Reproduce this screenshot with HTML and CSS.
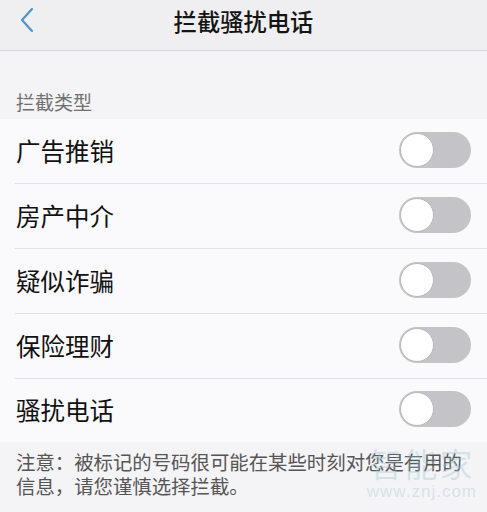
FILE: index.html
```html
<!DOCTYPE html>
<html lang="zh-CN">
<head>
    <meta charset="UTF-8">
    <meta name="viewport" content="width=device-width, initial-scale=1.0">
    <title>拦截骚扰电话</title>
    <link rel="stylesheet" href="styles.css">
</head>
<body>
    <header class="top-bar">
        <span class="back">
            <svg width="16" height="26" viewBox="0 0 16 26"><polyline points="13,2 3,13 13,24" fill="none" stroke="#4f93c9" stroke-width="2.2" stroke-linecap="round" stroke-linejoin="round"/></svg>
        </span>
        <h1 class="title">拦截骚扰电话</h1>
    </header>

    <div class="section-label">拦截类型</div>

    <ul class="list">
        <li class="row"><span class="row-text">广告推销</span><span class="switch"></span></li>
        <li class="row"><span class="row-text">房产中介</span><span class="switch"></span></li>
        <li class="row"><span class="row-text">疑似诈骗</span><span class="switch"></span></li>
        <li class="row"><span class="row-text">保险理财</span><span class="switch"></span></li>
        <li class="row"><span class="row-text">骚扰电话</span><span class="switch"></span></li>
    </ul>

    <p class="note">注意：被标记的号码很可能在某些时刻对您是有用的信息，请您谨慎选择拦截。</p>

    <!-- faint watermark over the bottom corner -->
    <div class="watermark">
        <span class="wm-big">智能家</span>
        <span class="wm-small">www.znj.com</span>
    </div>
</body>
</html>
```

FILE: styles.css
```css
body {
    margin: 0;
    width: 487px;
    height: 512px;
    overflow: hidden;
    position: relative;
    font-family: "Noto Sans CJK SC", "Noto Sans", sans-serif;
    background-color: #f4f3f6;
    color: #111111;
}

.top-bar {
    height: 50px;
    display: flex;
    align-items: center;
    justify-content: center;
    position: relative;
    background-color: #efeef1;
    border-bottom: 1px solid #d6d5d9;
}

.back {
    position: absolute;
    left: 19px;
    top: 7px;
}

.title {
    margin: 0 0 8px 0;
    font-size: 23.3px;
    font-weight: 500;
    color: #141414;
}

.section-label {
    height: 68px;
    box-sizing: border-box;
    padding: 38px 0 0 16px;
    font-size: 19px;
    line-height: 26px;
    color: #707070;
}

.list {
    list-style: none;
    margin: 0;
    padding: 0 0 0 15px;
    background-color: #faf9fc;
}

.row {
    height: 65px;
    display: flex;
    align-items: center;
    justify-content: space-between;
    border-bottom: 1px solid #e2e1e5;
    box-sizing: border-box;
}

.row:last-child {
    border-bottom: none;
    height: 63px;
}

.row-text {
    font-size: 24.5px;
    padding-left: 1px;
    margin-top: -2px;
}

.switch {
    width: 72px;
    height: 36px;
    margin-right: 16px;
    margin-top: -3px;
    border-radius: 18px;
    background-color: #c4c3c8;
    position: relative;
}

.switch::before {
    content: "";
    position: absolute;
    left: 1px;
    top: 1px;
    width: 32px;
    height: 32px;
    border-radius: 50%;
    background-color: #ffffff;
    border: 1px solid #b9b8bd;
}

.note {
    margin: 0;
    padding: 8px 20px 0 16px;
    font-size: 19.4px;
    line-height: 24px;
    color: #555555;
}

.watermark {
    position: absolute;
    right: 10px;
    top: 443px;
    display: flex;
    flex-direction: column;
    align-items: center;
    color: rgba(150, 195, 205, 0.35);
    pointer-events: none;
}

.wm-big {
    font-size: 33px;
    line-height: 40px;
    letter-spacing: 2px;
}

.wm-small {
    font-family: "Liberation Sans", sans-serif;
    font-size: 17px;
    line-height: 18px;
    letter-spacing: 1px;
}
```
